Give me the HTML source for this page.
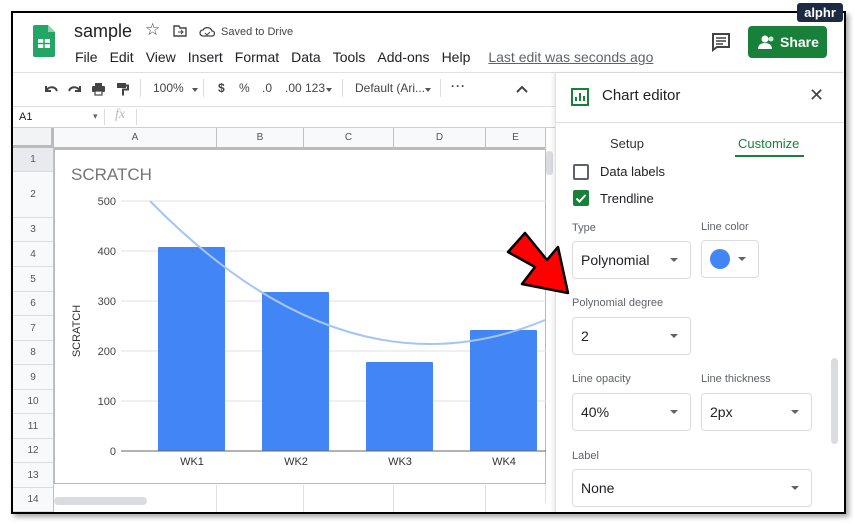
<!DOCTYPE html><html><head><style>
*{margin:0;padding:0;box-sizing:border-box}
body{width:855px;height:524px;background:#fff;font-family:"Liberation Sans",Arial,sans-serif;position:relative;overflow:hidden;color:#202124}
.a{position:absolute}
.frame{left:11px;top:11px;width:835px;height:503px;border:2px solid #000;box-shadow:3px 3px 5px rgba(0,0,0,.35);overflow:hidden;background:#fff}
.menu span{margin-right:12px}
.rh{position:absolute;left:0;width:40px;text-align:center;font-size:10px;color:#555;border-bottom:1px solid #dadce0}
.ch{position:absolute;top:115px;height:20px;font-size:10px;color:#555;text-align:center;line-height:20px;border-right:1px solid #c0c0c0;background:#f8f9fa}
.lbl{font-size:11px;color:#5f6368}
.box{position:absolute;border:1px solid #dadce0;border-radius:4px;font-size:14px;padding-left:8px;display:flex;align-items:center}
.dd{position:absolute;right:12px;top:50%;margin-top:-2px;border-left:4px solid transparent;border-right:4px solid transparent;border-top:4px solid #5f6368}
.tb{position:absolute;top:68px;font-size:12px;color:#444;white-space:nowrap}
.sep{position:absolute;top:66px;height:18px;border-left:1px solid #dadce0}
.tri{position:absolute;top:75px;border-left:3.5px solid transparent;border-right:3.5px solid transparent;border-top:4px solid #555}
</style></head><body>
<div class="a frame">
<svg class="a" style="left:20px;top:12px" width="22" height="32" viewBox="0 0 22 32"><path d="M2 0h13l7 7v23a2 2 0 0 1-2 2H2a2 2 0 0 1-2-2V2a2 2 0 0 1 2-2z" fill="#23a566"/><path d="M15 0v7h7z" fill="#8ed1b1"/><rect x="5" y="14" width="12" height="9" fill="#fff"/><path d="M5 18.5h12M11 14v9" stroke="#23a566" stroke-width="1.5"/></svg>
<div class="a" style="left:61px;top:8px;font-size:18px">sample</div>
<div class="a" style="left:132px;top:7px;font-size:17px;color:#444">☆</div>
<svg class="a" style="left:160px;top:12px" width="14" height="12"><path d="M1 1h5l1 2h6v8H1z" fill="none" stroke="#444" stroke-width="1.4"/><path d="M5 7h4M8 5l2 2-2 2" stroke="#444" fill="none"/></svg>
<svg class="a" style="left:186px;top:12px" width="16" height="12"><path d="M4 11a3 3 0 0 1 0-6 5 5 0 0 1 9 1 2.5 2.5 0 0 1 0 5z" fill="none" stroke="#444" stroke-width="1.3"/><path d="M6 8l2 2 3-3" stroke="#444" fill="none"/></svg>
<div class="a" style="left:208px;top:13px;font-size:11px;color:#444">Saved to Drive</div>
<div class="a menu" style="left:62px;top:36px;font-size:14px;white-space:nowrap"><span>File</span><span>Edit</span><span>View</span><span>Insert</span><span>Format</span><span>Data</span><span>Tools</span><span>Add-ons</span><span>Help</span><span style="color:#5f6368;text-decoration:underline;margin-left:6px">Last edit was seconds ago</span></div>
<svg class="a" style="left:698px;top:19px" width="20" height="20"><path d="M2 2h16v13H6l-4 3z" fill="none" stroke="#444" stroke-width="2"/><path d="M5 6h10M5 9h10M5 12h7" stroke="#444" stroke-width="1.5"/></svg>
<div class="a" style="left:735px;top:13px;width:79px;height:32px;background:#188038;border-radius:4px;color:#fff;font-size:14px;font-weight:bold;line-height:32px;padding-left:32px">Share</div>
<svg class="a" style="left:745px;top:21px" width="18" height="16"><circle cx="7" cy="5" r="3.5" fill="#fff"/><path d="M0 15c0-4 3-6 7-6s7 2 7 6z" fill="#fff"/><circle cx="13" cy="5" r="2.5" fill="#fff" opacity=".8"/></svg>
<div class="a" style="left:0;top:59px;width:830px;border-top:1px solid #e0e0e0"></div>
<!-- toolbar -->
<svg class="a" style="left:31px;top:69px" width="90" height="14">
<path d="M2 4v5h5M2.5 8.5C4 5 9 4 12 7l1 2" fill="none" stroke="#444" stroke-width="2"/>
<path d="M36 4v5h-5M35.5 8.5C34 5 29 4 26 7l-1 2" fill="none" stroke="#444" stroke-width="2"/>
<rect x="48" y="4" width="13" height="6" rx="1" fill="#444"/><rect x="51" y="1" width="7" height="3" fill="#444"/><rect x="51" y="9" width="7" height="4" fill="#fff" stroke="#444" stroke-width="1.2"/>
<rect x="73" y="1" width="9" height="5" fill="#444"/><path d="M82 3.5h2v4h-5v6" fill="none" stroke="#444" stroke-width="2"/>
</svg>
<div class="sep" style="left:127px"></div>
<div class="tb" style="left:140px">100%</div><div class="tri" style="left:179px"></div>
<div class="sep" style="left:190px"></div>
<div class="tb" style="left:205px;font-weight:bold">$</div>
<div class="tb" style="left:226px">%</div>
<div class="tb" style="left:249px">.0</div>
<div class="tb" style="left:272px">.00</div>
<div class="tb" style="left:292px">123</div><div class="tri" style="left:313px"></div>
<div class="sep" style="left:329px"></div>
<div class="tb" style="left:342px">Default (Ari...</div><div class="tri" style="left:412px"></div>
<div class="sep" style="left:427px"></div>
<div class="tb" style="left:438px;font-weight:bold;letter-spacing:1px;top:66px">···</div>
<svg class="a" style="left:503px;top:72px" width="12" height="8"><path d="M1 7l5-5 5 5" fill="none" stroke="#444" stroke-width="2"/></svg>
<div class="a" style="left:0;top:93px;width:543px;border-top:1px solid #e0e0e0"></div>
<div class="a" style="left:6px;top:98px;font-size:11px">A1</div>
<div class="a" style="left:80px;top:98px;font-size:9px;color:#666">▾</div>
<div class="a" style="left:91px;top:96px;height:16px;border-left:1px solid #dadce0"></div>
<div class="a" style="left:102px;top:94px;font-size:14px;color:#bbb;font-style:italic;font-family:'Liberation Serif',serif">fx</div>
<div class="a" style="left:123px;top:96px;height:16px;border-left:1px solid #dadce0"></div>
<div class="a" style="left:0;top:114px;width:543px;border-top:1px solid #d0d0d0"></div>
<div class="a" style="left:0;top:115px;width:41px;height:20px;background:#f1f3f4;border-right:3px solid #bbb;border-bottom:3px solid #bbb"></div>
<div class="ch" style="left:41px;width:163px">A</div>
<div class="ch" style="left:204px;width:87px">B</div>
<div class="ch" style="left:291px;width:90px">C</div>
<div class="ch" style="left:381px;width:92px">D</div>
<div class="ch" style="left:473px;width:60px">E</div>
<div class="a" style="left:41px;top:134px;width:492px;border-top:2px solid #bbb"></div>
<div class="a" style="left:0;top:135px;width:41px;height:370px;background:#f8f9fa;border-right:1px solid #c0c0c0">
<div class="rh" style="top:0;height:24px;line-height:24px;background:#e8eaed">1</div>
<div class="rh" style="top:24px;height:46px;line-height:46px">2</div>
<div class="rh" style="top:70px;height:24px;line-height:24px">3</div>
<div class="rh" style="top:94px;height:25px;line-height:25px">4</div>
<div class="rh" style="top:119px;height:25px;line-height:25px">5</div>
<div class="rh" style="top:144px;height:24px;line-height:24px">6</div>
<div class="rh" style="top:168px;height:25px;line-height:25px">7</div>
<div class="rh" style="top:193px;height:24px;line-height:24px">8</div>
<div class="rh" style="top:217px;height:25px;line-height:25px">9</div>
<div class="rh" style="top:242px;height:24px;line-height:24px">10</div>
<div class="rh" style="top:266px;height:25px;line-height:25px">11</div>
<div class="rh" style="top:291px;height:24px;line-height:24px">12</div>
<div class="rh" style="top:315px;height:25px;line-height:25px">13</div>
<div class="rh" style="top:340px;height:24px;line-height:24px">14</div>
</div>
<div class="a" style="left:203px;top:472px;height:30px;border-left:1px solid #e0e0e0"></div>
<div class="a" style="left:290px;top:472px;height:30px;border-left:1px solid #e0e0e0"></div>
<div class="a" style="left:380px;top:472px;height:30px;border-left:1px solid #e0e0e0"></div>
<div class="a" style="left:472px;top:472px;height:30px;border-left:1px solid #e0e0e0"></div>
<div class="a" style="left:41px;top:484px;width:93px;height:8px;background:#dadce0;border-radius:4px"></div>
<div class="a" style="left:532px;top:135px;width:10px;height:355px;border-left:1px solid #e0e0e0;background:#fff"></div>
<div class="a" style="left:533px;top:138px;width:7px;height:24px;background:#dadce0;border-radius:3px"></div>
<svg class="a" style="left:41px;top:136px" width="492" height="335">
<rect x="0.5" y="0.5" width="491" height="334" fill="#fff" stroke="#bbb"/>
<text x="17" y="31" font-size="17" fill="#757575" font-family="Liberation Sans">SCRATCH</text>
<g stroke="#e0e0e0" stroke-width="1">
<line x1="67" y1="52" x2="492" y2="52"/><line x1="67" y1="102" x2="492" y2="102"/><line x1="67" y1="152" x2="492" y2="152"/><line x1="67" y1="202" x2="492" y2="202"/><line x1="67" y1="252" x2="492" y2="252"/></g>
<g font-size="11" fill="#444" font-family="Liberation Sans" text-anchor="end">
<text x="62" y="56">500</text><text x="62" y="106">400</text><text x="62" y="156">300</text><text x="62" y="206">200</text><text x="62" y="256">100</text><text x="62" y="306">0</text></g>
<text transform="translate(26,182) rotate(-90)" font-size="11" fill="#333" text-anchor="middle" font-family="Liberation Sans">SCRATCH</text>
<g fill="#4285f4">
<rect x="104" y="98" width="67" height="204" rx="1"/><rect x="208" y="143" width="67" height="159" rx="1"/><rect x="312" y="213" width="67" height="89" rx="1"/><rect x="416" y="181" width="67" height="121" rx="1"/></g>
<path d="M96 52 Q293.5 253.7 491 171" fill="none" stroke="#a5c5f8" stroke-width="2"/>
<line x1="67" y1="302" x2="492" y2="302" stroke="#666"/>
<g font-size="11" fill="#333" font-family="Liberation Sans" text-anchor="middle">
<text x="138" y="316">WK1</text><text x="242" y="316">WK2</text><text x="346" y="316">WK3</text><text x="450" y="316">WK4</text></g>
</svg>
<div class="a" style="left:542px;top:60px;width:290px;height:445px;border-left:1px solid #e0e0e0;background:#fff;box-shadow:-2px 0 4px rgba(0,0,0,.08)">
<svg class="a" style="left:15px;top:15px" width="18" height="18"><rect x="1" y="1" width="16" height="16" fill="none" stroke="#188038" stroke-width="2"/><path d="M5 13V9M9 13V5M13 13V8" stroke="#188038" stroke-width="2"/></svg>
<div class="a" style="left:46px;top:14px;font-size:15px">Chart editor</div>
<div class="a" style="left:253px;top:12px;font-size:18px;color:#444">✕</div>
<div class="a" style="left:0;top:49px;width:290px;border-top:1px solid #e0e0e0"></div>
<div class="a" style="left:54px;top:63px;font-size:13px;color:#333">Setup</div>
<div class="a" style="left:182px;top:63px;font-size:13px;color:#188038">Customize</div>
<div class="a" style="left:179px;top:82px;width:69px;border-top:2px solid #188038"></div>
<div class="a" style="left:17px;top:91px;width:16px;height:16px;border:2px solid #5f6368;border-radius:2px"></div>
<div class="a" style="left:44px;top:91px;font-size:13px">Data labels</div>
<div class="a" style="left:17px;top:117px;width:16px;height:16px;background:#188038;border-radius:2px"></div>
<svg class="a" style="left:17px;top:117px" width="16" height="16"><path d="M3.5 8.5l3 3 6-6.5" stroke="#fff" stroke-width="2" fill="none"/></svg>
<div class="a" style="left:44px;top:118px;font-size:13px">Trendline</div>
<div class="a lbl" style="left:16px;top:149px">Type</div>
<div class="a lbl" style="left:145px;top:148px">Line color</div>
<div class="box" style="left:16px;top:168px;width:119px;height:38px">Polynomial<div class="dd"></div></div>
<div class="box" style="left:145px;top:167px;width:58px;height:38px"><div style="width:20px;height:20px;border-radius:50%;background:#4285f4"></div><div class="dd"></div></div>
<div class="a lbl" style="left:16px;top:224px">Polynomial degree</div>
<div class="box" style="left:16px;top:244px;width:119px;height:38px">2<div class="dd"></div></div>
<div class="a lbl" style="left:16px;top:300px">Line opacity</div>
<div class="a lbl" style="left:145px;top:300px">Line thickness</div>
<div class="box" style="left:16px;top:320px;width:119px;height:38px">40%<div class="dd"></div></div>
<div class="box" style="left:145px;top:320px;width:111px;height:38px">2px<div class="dd"></div></div>
<div class="a lbl" style="left:16px;top:377px">Label</div>
<div class="box" style="left:16px;top:396px;width:240px;height:38px">None<div class="dd"></div></div>
<div class="a" style="left:275px;top:285px;width:7px;height:86px;background:#dadce0;border-radius:4px"></div>
</div>
</div>
<svg class="a" style="left:0;top:0" width="855" height="524"><path d="M525 233 L508 252 L535 267 L522 284 L568 293 L558 247 L547 260 Z" fill="#f00" stroke="#000" stroke-width="2.5" stroke-linejoin="round"/></svg>
<div class="a" style="left:797px;top:3px;width:46px;height:19px;background:#1d2a44;border-radius:3px;color:#fff;font-size:13px;font-weight:bold;text-align:center;line-height:19px">alphr</div>
</body></html>
